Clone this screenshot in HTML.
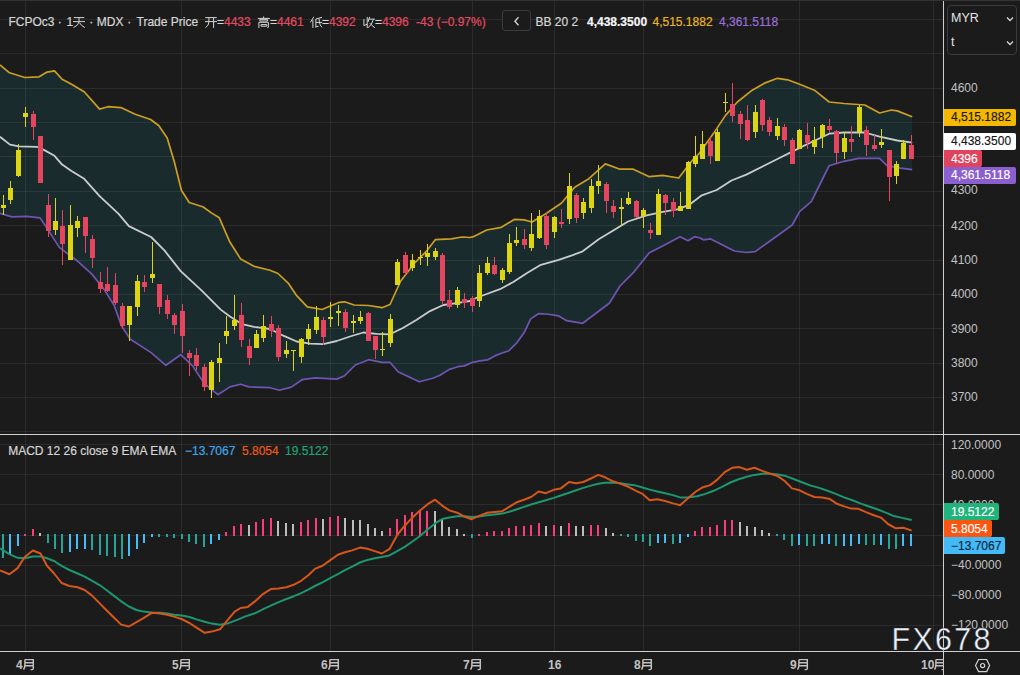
<!DOCTYPE html>
<html><head><meta charset="utf-8"><style>
html,body{margin:0;padding:0;background:#1b1b1b;width:1020px;height:675px;overflow:hidden}
body{position:relative;font-family:"Liberation Sans",sans-serif}
svg{position:absolute;left:0;top:0}
.t{position:absolute;white-space:nowrap;line-height:1}
.h{font-size:12px;color:#d6d6d6;top:16px;-webkit-text-stroke:0.2px currentColor}
.r{color:#e24a62}
.ax{font-size:12px;color:#c2c2c2;left:951px}
.tm{font-size:12px;color:#c2c2c2;font-weight:bold;top:659px}
.cj{display:inline-block;position:relative;width:12px;height:12px;vertical-align:top}
.cj svg{position:absolute;left:0;top:0;overflow:visible}
.lbl{position:absolute;left:944px;height:17px;font-size:12px;line-height:17px;padding-left:7px;box-sizing:border-box;white-space:nowrap;border-radius:0 2px 2px 0;-webkit-text-stroke:0.15px currentColor}
</style></head><body>
<svg width="1020" height="675" viewBox="0 0 1020 675">
<polygon points="0.0,65.0 9.5,72.8 24.9,77.5 39.1,76.8 47.0,72.1 54.5,70.9 62.1,79.2 71.1,83.9 84.2,91.8 99.6,109.1 107.9,106.7 120.9,107.6 135.2,114.3 150.6,119.5 158.9,125.7 167.2,138.0 174.3,161.7 181.4,190.2 189.2,202.5 202.8,206.8 212.2,213.4 219.3,217.8 230.0,242.3 240.7,259.1 254.0,266.3 270.0,270.3 278.0,273.5 288.7,283.7 296.7,295.7 307.3,306.9 322.0,309.5 339.3,302.3 344.7,301.8 354.0,305.0 368.7,305.5 382.0,307.7 390.0,304.5 400.7,281.0 414.0,263.7 426.0,251.7 435.3,239.7 451.3,238.9 462.0,237.0 470.0,237.5 473.3,236.7 486.7,230.0 501.3,227.3 514.7,219.3 524.0,219.9 532.0,222.0 545.3,214.0 561.3,203.3 574.7,187.3 588.0,179.3 605.3,163.9 620.0,169.2 633.3,169.2 649.3,176.7 662.7,175.3 678.7,178.0 692.0,160.7 698.9,153.9 713.7,133.1 725.5,115.4 737.4,102.0 752.2,90.2 764.0,83.4 777.4,78.3 787.7,79.8 799.6,84.3 814.4,90.2 829.2,102.0 844.0,103.5 864.8,105.0 879.6,113.0 891.4,110.0 897.3,110.9 912.2,116.8 912.2,169.6 900.3,168.1 887.0,165.7 879.6,158.3 858.8,158.3 844.0,161.3 829.2,165.7 820.3,183.5 811.4,201.3 799.6,211.6 792.2,225.0 775.9,236.8 755.2,251.6 746.3,252.5 734.4,251.0 722.6,245.1 710.7,238.9 703.3,239.8 700.0,238.0 694.7,236.7 688.0,240.7 680.0,236.7 662.7,246.0 649.3,252.7 633.3,272.7 620.0,286.0 609.3,303.3 593.3,315.3 582.7,323.3 566.7,320.7 558.7,315.9 546.7,314.0 538.5,313.7 530.7,318.9 524.4,332.2 517.0,342.6 508.9,350.7 502.2,353.0 494.8,355.9 487.4,359.9 480.0,360.8 472.6,362.3 464.4,365.9 457.8,366.7 448.9,369.6 440.0,375.2 432.7,378.3 419.3,381.8 398.0,371.7 390.0,362.3 382.0,362.3 368.7,359.7 355.3,365.0 344.7,375.7 336.7,379.1 315.3,377.8 302.0,379.7 291.3,387.1 279.3,390.3 270.0,387.7 248.7,386.9 240.7,384.2 230.0,386.9 217.8,394.7 204.4,383.7 192.6,365.9 180.7,354.7 165.9,365.3 151.1,352.6 130.4,339.3 121.5,325.9 114.1,305.2 103.7,288.9 91.9,274.1 77.0,260.7 59.3,247.4 48.9,231.1 40.0,217.8 26.7,216.3 11.9,216.9 0.0,213.3" fill="#1a2b2e"/>
<rect x="0" y="19" width="944" height="1" fill="rgba(255,255,255,0.07)"/>
<rect x="0" y="53" width="944" height="1" fill="rgba(255,255,255,0.07)"/>
<rect x="0" y="88" width="944" height="1" fill="rgba(255,255,255,0.07)"/>
<rect x="0" y="122" width="944" height="1" fill="rgba(255,255,255,0.07)"/>
<rect x="0" y="156" width="944" height="1" fill="rgba(255,255,255,0.07)"/>
<rect x="0" y="191" width="944" height="1" fill="rgba(255,255,255,0.07)"/>
<rect x="0" y="225" width="944" height="1" fill="rgba(255,255,255,0.07)"/>
<rect x="0" y="260" width="944" height="1" fill="rgba(255,255,255,0.07)"/>
<rect x="0" y="294" width="944" height="1" fill="rgba(255,255,255,0.07)"/>
<rect x="0" y="328" width="944" height="1" fill="rgba(255,255,255,0.07)"/>
<rect x="0" y="363" width="944" height="1" fill="rgba(255,255,255,0.07)"/>
<rect x="0" y="397" width="944" height="1" fill="rgba(255,255,255,0.07)"/>
<rect x="0" y="431" width="944" height="1" fill="rgba(255,255,255,0.07)"/>
<rect x="0" y="444" width="944" height="1" fill="rgba(255,255,255,0.07)"/>
<rect x="0" y="474" width="944" height="1" fill="rgba(255,255,255,0.07)"/>
<rect x="0" y="504" width="944" height="1" fill="rgba(255,255,255,0.07)"/>
<rect x="0" y="535" width="944" height="1" fill="rgba(255,255,255,0.07)"/>
<rect x="0" y="565" width="944" height="1" fill="rgba(255,255,255,0.07)"/>
<rect x="0" y="595" width="944" height="1" fill="rgba(255,255,255,0.07)"/>
<rect x="0" y="625" width="944" height="1" fill="rgba(255,255,255,0.07)"/>
<rect x="25" y="0" width="1" height="651" fill="rgba(255,255,255,0.07)"/>
<rect x="181" y="0" width="1" height="651" fill="rgba(255,255,255,0.07)"/>
<rect x="330" y="0" width="1" height="651" fill="rgba(255,255,255,0.07)"/>
<rect x="472" y="0" width="1" height="651" fill="rgba(255,255,255,0.07)"/>
<rect x="554" y="0" width="1" height="651" fill="rgba(255,255,255,0.07)"/>
<rect x="643" y="0" width="1" height="651" fill="rgba(255,255,255,0.07)"/>
<rect x="799" y="0" width="1" height="651" fill="rgba(255,255,255,0.07)"/>
<rect x="933" y="0" width="1" height="651" fill="rgba(255,255,255,0.07)"/>
<polyline points="0.0,65.0 9.5,72.8 24.9,77.5 39.1,76.8 47.0,72.1 54.5,70.9 62.1,79.2 71.1,83.9 84.2,91.8 99.6,109.1 107.9,106.7 120.9,107.6 135.2,114.3 150.6,119.5 158.9,125.7 167.2,138.0 174.3,161.7 181.4,190.2 189.2,202.5 202.8,206.8 212.2,213.4 219.3,217.8 230.0,242.3 240.7,259.1 254.0,266.3 270.0,270.3 278.0,273.5 288.7,283.7 296.7,295.7 307.3,306.9 322.0,309.5 339.3,302.3 344.7,301.8 354.0,305.0 368.7,305.5 382.0,307.7 390.0,304.5 400.7,281.0 414.0,263.7 426.0,251.7 435.3,239.7 451.3,238.9 462.0,237.0 470.0,237.5 473.3,236.7 486.7,230.0 501.3,227.3 514.7,219.3 524.0,219.9 532.0,222.0 545.3,214.0 561.3,203.3 574.7,187.3 588.0,179.3 605.3,163.9 620.0,169.2 633.3,169.2 649.3,176.7 662.7,175.3 678.7,178.0 692.0,160.7 698.9,153.9 713.7,133.1 725.5,115.4 737.4,102.0 752.2,90.2 764.0,83.4 777.4,78.3 787.7,79.8 799.6,84.3 814.4,90.2 829.2,102.0 844.0,103.5 864.8,105.0 879.6,113.0 891.4,110.0 897.3,110.9 912.2,116.8" fill="none" stroke="#cc9e22" stroke-width="1.7" stroke-linejoin="round"/>
<polyline points="0.0,213.3 11.9,216.9 26.7,216.3 40.0,217.8 48.9,231.1 59.3,247.4 77.0,260.7 91.9,274.1 103.7,288.9 114.1,305.2 121.5,325.9 130.4,339.3 151.1,352.6 165.9,365.3 180.7,354.7 192.6,365.9 204.4,383.7 217.8,394.7 230.0,386.9 240.7,384.2 248.7,386.9 270.0,387.7 279.3,390.3 291.3,387.1 302.0,379.7 315.3,377.8 336.7,379.1 344.7,375.7 355.3,365.0 368.7,359.7 382.0,362.3 390.0,362.3 398.0,371.7 419.3,381.8 432.7,378.3 440.0,375.2 448.9,369.6 457.8,366.7 464.4,365.9 472.6,362.3 480.0,360.8 487.4,359.9 494.8,355.9 502.2,353.0 508.9,350.7 517.0,342.6 524.4,332.2 530.7,318.9 538.5,313.7 546.7,314.0 558.7,315.9 566.7,320.7 582.7,323.3 593.3,315.3 609.3,303.3 620.0,286.0 633.3,272.7 649.3,252.7 662.7,246.0 680.0,236.7 688.0,240.7 694.7,236.7 700.0,238.0 703.3,239.8 710.7,238.9 722.6,245.1 734.4,251.0 746.3,252.5 755.2,251.6 775.9,236.8 792.2,225.0 799.6,211.6 811.4,201.3 820.3,183.5 829.2,165.7 844.0,161.3 858.8,158.3 879.6,158.3 887.0,165.7 900.3,168.1 912.2,169.6" fill="none" stroke="#6f55b3" stroke-width="1.7" stroke-linejoin="round"/>
<polyline points="0.0,136.8 10.0,144.6 19.0,146.3 36.8,146.8 43.9,149.9 54.5,155.8 62.1,164.6 71.1,170.7 84.2,178.8 99.6,196.1 118.6,213.9 128.9,226.1 151.1,237.0 164.4,250.4 180.7,271.1 201.5,290.4 220.7,309.6 230.0,316.5 242.0,324.2 254.0,326.9 270.0,329.0 283.3,335.7 296.7,341.5 310.0,343.7 323.3,344.2 336.7,341.0 350.0,336.5 363.3,332.5 376.7,333.8 390.0,334.3 403.3,327.7 416.7,319.7 430.0,311.1 443.3,305.0 456.7,303.1 470.0,301.0 476.0,298.0 486.7,294.0 500.0,289.2 513.3,282.0 526.7,273.2 540.0,265.2 558.7,259.9 572.0,255.3 582.7,251.3 598.7,239.3 612.0,231.3 628.0,221.5 646.7,215.3 662.7,211.9 678.7,209.2 689.3,204.7 701.8,195.3 716.7,190.0 731.5,180.5 746.3,174.6 764.0,165.7 778.9,158.3 790.7,152.4 808.5,143.5 829.2,133.7 844.0,132.5 864.8,132.5 879.6,136.7 897.3,140.5 912.2,142.6" fill="none" stroke="#c9cccc" stroke-width="1.8" stroke-linejoin="round"/>
<rect x="3" y="195" width="1" height="20" fill="#dcd514"/>
<rect x="1" y="205" width="5" height="3" fill="#dcd514"/>
<rect x="10" y="181" width="1" height="23" fill="#dcd514"/>
<rect x="8" y="188" width="5" height="12" fill="#dcd514"/>
<rect x="18" y="144" width="1" height="33" fill="#dcd514"/>
<rect x="16" y="150" width="5" height="26" fill="#dcd514"/>
<rect x="25" y="107" width="1" height="20" fill="#dcd514"/>
<rect x="23" y="113" width="5" height="4" fill="#dcd514"/>
<rect x="33" y="111" width="1" height="29" fill="#e6455f"/>
<rect x="31" y="114" width="5" height="13" fill="#e6455f"/>
<rect x="40" y="136" width="1" height="47" fill="#e6455f"/>
<rect x="38" y="136" width="5" height="47" fill="#e6455f"/>
<rect x="48" y="194" width="1" height="43" fill="#e6455f"/>
<rect x="46" y="205" width="5" height="26" fill="#e6455f"/>
<rect x="55" y="198" width="1" height="37" fill="#dcd514"/>
<rect x="53" y="221" width="5" height="9" fill="#dcd514"/>
<rect x="62" y="210" width="1" height="55" fill="#e6455f"/>
<rect x="60" y="226" width="5" height="18" fill="#e6455f"/>
<rect x="70" y="205" width="1" height="55" fill="#dcd514"/>
<rect x="68" y="225" width="5" height="35" fill="#dcd514"/>
<rect x="77" y="216" width="1" height="21" fill="#dcd514"/>
<rect x="75" y="221" width="5" height="7" fill="#dcd514"/>
<rect x="85" y="217" width="1" height="36" fill="#e6455f"/>
<rect x="83" y="217" width="5" height="19" fill="#e6455f"/>
<rect x="92" y="235" width="1" height="33" fill="#e6455f"/>
<rect x="90" y="239" width="5" height="19" fill="#e6455f"/>
<rect x="100" y="272" width="1" height="21" fill="#e6455f"/>
<rect x="98" y="282" width="5" height="7" fill="#e6455f"/>
<rect x="107" y="267" width="1" height="25" fill="#e6455f"/>
<rect x="105" y="284" width="5" height="7" fill="#e6455f"/>
<rect x="115" y="273" width="1" height="32" fill="#e6455f"/>
<rect x="113" y="285" width="5" height="18" fill="#e6455f"/>
<rect x="122" y="303" width="1" height="26" fill="#e6455f"/>
<rect x="120" y="306" width="5" height="20" fill="#e6455f"/>
<rect x="129" y="306" width="1" height="35" fill="#dcd514"/>
<rect x="127" y="306" width="5" height="19" fill="#dcd514"/>
<rect x="137" y="275" width="1" height="41" fill="#dcd514"/>
<rect x="135" y="281" width="5" height="26" fill="#dcd514"/>
<rect x="144" y="275" width="1" height="17" fill="#e6455f"/>
<rect x="142" y="282" width="5" height="5" fill="#e6455f"/>
<rect x="152" y="242" width="1" height="41" fill="#dcd514"/>
<rect x="150" y="274" width="5" height="4" fill="#dcd514"/>
<rect x="159" y="284" width="1" height="30" fill="#e6455f"/>
<rect x="157" y="284" width="5" height="23" fill="#e6455f"/>
<rect x="167" y="295" width="1" height="24" fill="#e6455f"/>
<rect x="165" y="300" width="5" height="14" fill="#e6455f"/>
<rect x="174" y="313" width="1" height="21" fill="#e6455f"/>
<rect x="172" y="315" width="5" height="10" fill="#e6455f"/>
<rect x="182" y="304" width="1" height="49" fill="#e6455f"/>
<rect x="180" y="311" width="5" height="25" fill="#e6455f"/>
<rect x="189" y="350" width="1" height="26" fill="#e6455f"/>
<rect x="187" y="353" width="5" height="5" fill="#e6455f"/>
<rect x="196" y="348" width="1" height="22" fill="#e6455f"/>
<rect x="194" y="355" width="5" height="11" fill="#e6455f"/>
<rect x="204" y="364" width="1" height="27" fill="#e6455f"/>
<rect x="202" y="367" width="5" height="20" fill="#e6455f"/>
<rect x="211" y="360" width="1" height="38" fill="#dcd514"/>
<rect x="209" y="362" width="5" height="28" fill="#dcd514"/>
<rect x="219" y="343" width="1" height="39" fill="#dcd514"/>
<rect x="217" y="358" width="5" height="5" fill="#dcd514"/>
<rect x="226" y="316" width="1" height="28" fill="#dcd514"/>
<rect x="224" y="331" width="5" height="5" fill="#dcd514"/>
<rect x="234" y="295" width="1" height="35" fill="#dcd514"/>
<rect x="232" y="320" width="5" height="6" fill="#dcd514"/>
<rect x="241" y="303" width="1" height="44" fill="#e6455f"/>
<rect x="239" y="315" width="5" height="25" fill="#e6455f"/>
<rect x="249" y="339" width="1" height="26" fill="#e6455f"/>
<rect x="247" y="346" width="5" height="12" fill="#e6455f"/>
<rect x="256" y="330" width="1" height="18" fill="#dcd514"/>
<rect x="254" y="334" width="5" height="14" fill="#dcd514"/>
<rect x="263" y="315" width="1" height="27" fill="#dcd514"/>
<rect x="261" y="326" width="5" height="12" fill="#dcd514"/>
<rect x="271" y="316" width="1" height="21" fill="#e6455f"/>
<rect x="269" y="324" width="5" height="7" fill="#e6455f"/>
<rect x="278" y="325" width="1" height="36" fill="#e6455f"/>
<rect x="276" y="328" width="5" height="29" fill="#e6455f"/>
<rect x="286" y="341" width="1" height="17" fill="#dcd514"/>
<rect x="284" y="350" width="5" height="4" fill="#dcd514"/>
<rect x="293" y="350" width="1" height="21" fill="#dcd514"/>
<rect x="291" y="350" width="5" height="1" fill="#dcd514"/>
<rect x="301" y="338" width="1" height="25" fill="#dcd514"/>
<rect x="299" y="339" width="5" height="18" fill="#dcd514"/>
<rect x="308" y="324" width="1" height="21" fill="#dcd514"/>
<rect x="306" y="329" width="5" height="10" fill="#dcd514"/>
<rect x="316" y="306" width="1" height="28" fill="#dcd514"/>
<rect x="314" y="317" width="5" height="13" fill="#dcd514"/>
<rect x="323" y="317" width="1" height="28" fill="#e6455f"/>
<rect x="321" y="320" width="5" height="17" fill="#e6455f"/>
<rect x="330" y="302" width="1" height="25" fill="#dcd514"/>
<rect x="328" y="317" width="5" height="2" fill="#dcd514"/>
<rect x="338" y="305" width="1" height="21" fill="#dcd514"/>
<rect x="336" y="311" width="5" height="2" fill="#dcd514"/>
<rect x="345" y="309" width="1" height="23" fill="#e6455f"/>
<rect x="343" y="312" width="5" height="16" fill="#e6455f"/>
<rect x="353" y="315" width="1" height="18" fill="#dcd514"/>
<rect x="351" y="321" width="5" height="2" fill="#dcd514"/>
<rect x="360" y="311" width="1" height="13" fill="#dcd514"/>
<rect x="358" y="317" width="5" height="4" fill="#dcd514"/>
<rect x="368" y="312" width="1" height="29" fill="#e6455f"/>
<rect x="366" y="313" width="5" height="28" fill="#e6455f"/>
<rect x="375" y="336" width="1" height="23" fill="#e6455f"/>
<rect x="373" y="336" width="5" height="14" fill="#e6455f"/>
<rect x="382" y="332" width="1" height="24" fill="#dcd514"/>
<rect x="380" y="349" width="5" height="1" fill="#dcd514"/>
<rect x="390" y="314" width="1" height="33" fill="#dcd514"/>
<rect x="388" y="319" width="5" height="24" fill="#dcd514"/>
<rect x="397" y="259" width="1" height="26" fill="#dcd514"/>
<rect x="395" y="262" width="5" height="23" fill="#dcd514"/>
<rect x="405" y="252" width="1" height="23" fill="#e6455f"/>
<rect x="403" y="255" width="5" height="18" fill="#e6455f"/>
<rect x="412" y="254" width="1" height="17" fill="#dcd514"/>
<rect x="410" y="260" width="5" height="8" fill="#dcd514"/>
<rect x="420" y="250" width="1" height="15" fill="#dcd514"/>
<rect x="418" y="257" width="5" height="1" fill="#dcd514"/>
<rect x="427" y="244" width="1" height="22" fill="#dcd514"/>
<rect x="425" y="253" width="5" height="4" fill="#dcd514"/>
<rect x="435" y="248" width="1" height="12" fill="#dcd514"/>
<rect x="433" y="251" width="5" height="6" fill="#dcd514"/>
<rect x="442" y="253" width="1" height="52" fill="#e6455f"/>
<rect x="440" y="255" width="5" height="46" fill="#e6455f"/>
<rect x="449" y="290" width="1" height="19" fill="#e6455f"/>
<rect x="447" y="300" width="5" height="7" fill="#e6455f"/>
<rect x="457" y="287" width="1" height="21" fill="#dcd514"/>
<rect x="455" y="290" width="5" height="15" fill="#dcd514"/>
<rect x="464" y="293" width="1" height="15" fill="#e6455f"/>
<rect x="462" y="299" width="5" height="4" fill="#e6455f"/>
<rect x="472" y="296" width="1" height="16" fill="#e6455f"/>
<rect x="470" y="298" width="5" height="8" fill="#e6455f"/>
<rect x="479" y="265" width="1" height="42" fill="#dcd514"/>
<rect x="477" y="273" width="5" height="28" fill="#dcd514"/>
<rect x="487" y="257" width="1" height="18" fill="#dcd514"/>
<rect x="485" y="263" width="5" height="10" fill="#dcd514"/>
<rect x="494" y="257" width="1" height="18" fill="#e6455f"/>
<rect x="492" y="265" width="5" height="9" fill="#e6455f"/>
<rect x="502" y="268" width="1" height="15" fill="#dcd514"/>
<rect x="500" y="270" width="5" height="10" fill="#dcd514"/>
<rect x="509" y="234" width="1" height="40" fill="#dcd514"/>
<rect x="507" y="243" width="5" height="29" fill="#dcd514"/>
<rect x="516" y="227" width="1" height="19" fill="#dcd514"/>
<rect x="514" y="240" width="5" height="3" fill="#dcd514"/>
<rect x="524" y="229" width="1" height="20" fill="#e6455f"/>
<rect x="522" y="239" width="5" height="6" fill="#e6455f"/>
<rect x="531" y="213" width="1" height="38" fill="#dcd514"/>
<rect x="529" y="234" width="5" height="14" fill="#dcd514"/>
<rect x="539" y="210" width="1" height="29" fill="#dcd514"/>
<rect x="537" y="216" width="5" height="22" fill="#dcd514"/>
<rect x="546" y="212" width="1" height="37" fill="#e6455f"/>
<rect x="544" y="216" width="5" height="29" fill="#e6455f"/>
<rect x="554" y="216" width="1" height="22" fill="#dcd514"/>
<rect x="552" y="217" width="5" height="15" fill="#dcd514"/>
<rect x="561" y="209" width="1" height="19" fill="#e6455f"/>
<rect x="559" y="222" width="5" height="2" fill="#e6455f"/>
<rect x="569" y="173" width="1" height="51" fill="#dcd514"/>
<rect x="567" y="186" width="5" height="33" fill="#dcd514"/>
<rect x="576" y="193" width="1" height="30" fill="#e6455f"/>
<rect x="574" y="195" width="5" height="23" fill="#e6455f"/>
<rect x="583" y="198" width="1" height="21" fill="#dcd514"/>
<rect x="581" y="202" width="5" height="11" fill="#dcd514"/>
<rect x="591" y="179" width="1" height="34" fill="#dcd514"/>
<rect x="589" y="186" width="5" height="22" fill="#dcd514"/>
<rect x="598" y="165" width="1" height="29" fill="#dcd514"/>
<rect x="596" y="181" width="5" height="5" fill="#dcd514"/>
<rect x="606" y="182" width="1" height="31" fill="#e6455f"/>
<rect x="604" y="184" width="5" height="17" fill="#e6455f"/>
<rect x="613" y="200" width="1" height="18" fill="#e6455f"/>
<rect x="611" y="206" width="5" height="6" fill="#e6455f"/>
<rect x="621" y="198" width="1" height="28" fill="#dcd514"/>
<rect x="619" y="207" width="5" height="2" fill="#dcd514"/>
<rect x="628" y="192" width="1" height="13" fill="#dcd514"/>
<rect x="626" y="198" width="5" height="6" fill="#dcd514"/>
<rect x="636" y="200" width="1" height="18" fill="#e6455f"/>
<rect x="634" y="201" width="5" height="16" fill="#e6455f"/>
<rect x="643" y="208" width="1" height="20" fill="#dcd514"/>
<rect x="641" y="210" width="5" height="6" fill="#dcd514"/>
<rect x="650" y="223" width="1" height="16" fill="#e6455f"/>
<rect x="648" y="230" width="5" height="3" fill="#e6455f"/>
<rect x="658" y="189" width="1" height="46" fill="#dcd514"/>
<rect x="656" y="194" width="5" height="41" fill="#dcd514"/>
<rect x="665" y="194" width="1" height="21" fill="#e6455f"/>
<rect x="663" y="195" width="5" height="8" fill="#e6455f"/>
<rect x="673" y="198" width="1" height="19" fill="#e6455f"/>
<rect x="671" y="202" width="5" height="9" fill="#e6455f"/>
<rect x="680" y="192" width="1" height="19" fill="#dcd514"/>
<rect x="678" y="206" width="5" height="5" fill="#dcd514"/>
<rect x="688" y="161" width="1" height="48" fill="#dcd514"/>
<rect x="686" y="162" width="5" height="47" fill="#dcd514"/>
<rect x="695" y="136" width="1" height="31" fill="#dcd514"/>
<rect x="693" y="156" width="5" height="8" fill="#dcd514"/>
<rect x="702" y="131" width="1" height="28" fill="#dcd514"/>
<rect x="700" y="144" width="5" height="15" fill="#dcd514"/>
<rect x="710" y="136" width="1" height="28" fill="#e6455f"/>
<rect x="708" y="141" width="5" height="15" fill="#e6455f"/>
<rect x="717" y="129" width="1" height="32" fill="#dcd514"/>
<rect x="715" y="132" width="5" height="29" fill="#dcd514"/>
<rect x="725" y="93" width="1" height="19" fill="#dcd514"/>
<rect x="723" y="102" width="5" height="1" fill="#dcd514"/>
<rect x="732" y="83" width="1" height="39" fill="#e6455f"/>
<rect x="730" y="104" width="5" height="12" fill="#e6455f"/>
<rect x="740" y="111" width="1" height="28" fill="#e6455f"/>
<rect x="738" y="114" width="5" height="10" fill="#e6455f"/>
<rect x="747" y="105" width="1" height="36" fill="#e6455f"/>
<rect x="745" y="120" width="5" height="20" fill="#e6455f"/>
<rect x="755" y="105" width="1" height="33" fill="#dcd514"/>
<rect x="753" y="112" width="5" height="20" fill="#dcd514"/>
<rect x="762" y="99" width="1" height="32" fill="#e6455f"/>
<rect x="760" y="100" width="5" height="25" fill="#e6455f"/>
<rect x="769" y="117" width="1" height="19" fill="#e6455f"/>
<rect x="767" y="120" width="5" height="12" fill="#e6455f"/>
<rect x="777" y="118" width="1" height="22" fill="#dcd514"/>
<rect x="775" y="126" width="5" height="10" fill="#dcd514"/>
<rect x="784" y="124" width="1" height="22" fill="#e6455f"/>
<rect x="782" y="127" width="5" height="13" fill="#e6455f"/>
<rect x="792" y="138" width="1" height="26" fill="#e6455f"/>
<rect x="790" y="140" width="5" height="24" fill="#e6455f"/>
<rect x="799" y="129" width="1" height="20" fill="#dcd514"/>
<rect x="797" y="130" width="5" height="19" fill="#dcd514"/>
<rect x="807" y="123" width="1" height="26" fill="#e6455f"/>
<rect x="805" y="135" width="5" height="8" fill="#e6455f"/>
<rect x="814" y="127" width="1" height="27" fill="#dcd514"/>
<rect x="812" y="140" width="5" height="7" fill="#dcd514"/>
<rect x="822" y="124" width="1" height="24" fill="#dcd514"/>
<rect x="820" y="125" width="5" height="12" fill="#dcd514"/>
<rect x="829" y="119" width="1" height="14" fill="#e6455f"/>
<rect x="827" y="126" width="5" height="4" fill="#e6455f"/>
<rect x="836" y="130" width="1" height="33" fill="#e6455f"/>
<rect x="834" y="131" width="5" height="22" fill="#e6455f"/>
<rect x="844" y="132" width="1" height="27" fill="#dcd514"/>
<rect x="842" y="138" width="5" height="14" fill="#dcd514"/>
<rect x="851" y="126" width="1" height="26" fill="#e6455f"/>
<rect x="849" y="139" width="5" height="3" fill="#e6455f"/>
<rect x="859" y="105" width="1" height="32" fill="#dcd514"/>
<rect x="857" y="107" width="5" height="25" fill="#dcd514"/>
<rect x="866" y="126" width="1" height="30" fill="#e6455f"/>
<rect x="864" y="130" width="5" height="15" fill="#e6455f"/>
<rect x="874" y="135" width="1" height="16" fill="#e6455f"/>
<rect x="872" y="145" width="5" height="4" fill="#e6455f"/>
<rect x="881" y="129" width="1" height="19" fill="#dcd514"/>
<rect x="879" y="142" width="5" height="3" fill="#dcd514"/>
<rect x="889" y="150" width="1" height="51" fill="#e6455f"/>
<rect x="887" y="150" width="5" height="27" fill="#e6455f"/>
<rect x="896" y="161" width="1" height="23" fill="#dcd514"/>
<rect x="894" y="164" width="5" height="12" fill="#dcd514"/>
<rect x="903" y="140" width="1" height="19" fill="#dcd514"/>
<rect x="901" y="143" width="5" height="16" fill="#dcd514"/>
<rect x="911" y="135" width="1" height="24" fill="#e6455f"/>
<rect x="909" y="145" width="5" height="14" fill="#e6455f"/>
<rect x="2" y="534" width="2" height="24" fill="#22a69a"/>
<rect x="9" y="534" width="2" height="20" fill="#43bdf7"/>
<rect x="17" y="534" width="2" height="12" fill="#43bdf7"/>
<rect x="24" y="534" width="2" height="2" fill="#fb3b7a"/>
<rect x="32" y="529" width="2" height="7" fill="#fb3b7a"/>
<rect x="39" y="533" width="2" height="3" fill="#bdbdbd"/>
<rect x="47" y="534" width="2" height="9" fill="#22a69a"/>
<rect x="54" y="534" width="2" height="15" fill="#22a69a"/>
<rect x="61" y="534" width="2" height="19" fill="#22a69a"/>
<rect x="69" y="534" width="2" height="18" fill="#43bdf7"/>
<rect x="76" y="534" width="2" height="15" fill="#43bdf7"/>
<rect x="84" y="534" width="2" height="15" fill="#43bdf7"/>
<rect x="91" y="534" width="2" height="16" fill="#22a69a"/>
<rect x="99" y="534" width="2" height="21" fill="#22a69a"/>
<rect x="106" y="534" width="2" height="22" fill="#22a69a"/>
<rect x="114" y="534" width="2" height="23" fill="#22a69a"/>
<rect x="121" y="534" width="2" height="25" fill="#22a69a"/>
<rect x="128" y="534" width="2" height="22" fill="#43bdf7"/>
<rect x="136" y="534" width="2" height="15" fill="#43bdf7"/>
<rect x="143" y="534" width="2" height="9" fill="#43bdf7"/>
<rect x="151" y="534" width="2" height="3" fill="#43bdf7"/>
<rect x="158" y="534" width="2" height="3" fill="#22a69a"/>
<rect x="166" y="534" width="2" height="3" fill="#22a69a"/>
<rect x="173" y="534" width="2" height="4" fill="#22a69a"/>
<rect x="181" y="534" width="2" height="5" fill="#22a69a"/>
<rect x="188" y="534" width="2" height="8" fill="#22a69a"/>
<rect x="195" y="534" width="2" height="10" fill="#22a69a"/>
<rect x="203" y="534" width="2" height="13" fill="#22a69a"/>
<rect x="210" y="534" width="2" height="10" fill="#43bdf7"/>
<rect x="218" y="534" width="2" height="6" fill="#43bdf7"/>
<rect x="225" y="532" width="2" height="4" fill="#fb3b7a"/>
<rect x="233" y="526" width="2" height="10" fill="#fb3b7a"/>
<rect x="240" y="524" width="2" height="12" fill="#fb3b7a"/>
<rect x="248" y="525" width="2" height="11" fill="#bdbdbd"/>
<rect x="255" y="522" width="2" height="14" fill="#fb3b7a"/>
<rect x="262" y="519" width="2" height="17" fill="#fb3b7a"/>
<rect x="270" y="518" width="2" height="18" fill="#fb3b7a"/>
<rect x="277" y="521" width="2" height="15" fill="#bdbdbd"/>
<rect x="285" y="523" width="2" height="13" fill="#bdbdbd"/>
<rect x="292" y="524" width="2" height="12" fill="#bdbdbd"/>
<rect x="300" y="522" width="2" height="14" fill="#fb3b7a"/>
<rect x="307" y="520" width="2" height="16" fill="#fb3b7a"/>
<rect x="315" y="518" width="2" height="18" fill="#fb3b7a"/>
<rect x="322" y="519" width="2" height="17" fill="#bdbdbd"/>
<rect x="329" y="517" width="2" height="19" fill="#fb3b7a"/>
<rect x="337" y="516" width="2" height="20" fill="#fb3b7a"/>
<rect x="344" y="518" width="2" height="18" fill="#bdbdbd"/>
<rect x="352" y="520" width="2" height="16" fill="#bdbdbd"/>
<rect x="359" y="520" width="2" height="16" fill="#bdbdbd"/>
<rect x="367" y="524" width="2" height="12" fill="#bdbdbd"/>
<rect x="374" y="528" width="2" height="8" fill="#bdbdbd"/>
<rect x="381" y="531" width="2" height="5" fill="#bdbdbd"/>
<rect x="389" y="528" width="2" height="8" fill="#fb3b7a"/>
<rect x="396" y="519" width="2" height="17" fill="#fb3b7a"/>
<rect x="404" y="515" width="2" height="21" fill="#fb3b7a"/>
<rect x="411" y="512" width="2" height="24" fill="#fb3b7a"/>
<rect x="419" y="511" width="2" height="25" fill="#fb3b7a"/>
<rect x="426" y="511" width="2" height="25" fill="#fb3b7a"/>
<rect x="434" y="511" width="2" height="25" fill="#bdbdbd"/>
<rect x="441" y="520" width="2" height="16" fill="#bdbdbd"/>
<rect x="448" y="527" width="2" height="9" fill="#bdbdbd"/>
<rect x="456" y="529" width="2" height="7" fill="#bdbdbd"/>
<rect x="463" y="534" width="2" height="2" fill="#bdbdbd"/>
<rect x="471" y="534" width="2" height="4" fill="#22a69a"/>
<rect x="478" y="534" width="2" height="2" fill="#fb3b7a"/>
<rect x="486" y="532" width="2" height="4" fill="#fb3b7a"/>
<rect x="493" y="531" width="2" height="5" fill="#fb3b7a"/>
<rect x="501" y="531" width="2" height="5" fill="#fb3b7a"/>
<rect x="508" y="528" width="2" height="8" fill="#fb3b7a"/>
<rect x="515" y="526" width="2" height="10" fill="#fb3b7a"/>
<rect x="523" y="526" width="2" height="10" fill="#fb3b7a"/>
<rect x="530" y="525" width="2" height="11" fill="#fb3b7a"/>
<rect x="538" y="523" width="2" height="13" fill="#fb3b7a"/>
<rect x="545" y="526" width="2" height="10" fill="#bdbdbd"/>
<rect x="553" y="525" width="2" height="11" fill="#fb3b7a"/>
<rect x="560" y="526" width="2" height="10" fill="#bdbdbd"/>
<rect x="568" y="523" width="2" height="13" fill="#fb3b7a"/>
<rect x="575" y="526" width="2" height="10" fill="#bdbdbd"/>
<rect x="582" y="526" width="2" height="10" fill="#bdbdbd"/>
<rect x="590" y="525" width="2" height="11" fill="#fb3b7a"/>
<rect x="597" y="525" width="2" height="11" fill="#fb3b7a"/>
<rect x="605" y="528" width="2" height="8" fill="#bdbdbd"/>
<rect x="612" y="533" width="2" height="3" fill="#bdbdbd"/>
<rect x="620" y="534" width="2" height="2" fill="#22a69a"/>
<rect x="627" y="534" width="2" height="3" fill="#22a69a"/>
<rect x="635" y="534" width="2" height="7" fill="#22a69a"/>
<rect x="642" y="534" width="2" height="8" fill="#22a69a"/>
<rect x="649" y="534" width="2" height="12" fill="#22a69a"/>
<rect x="657" y="534" width="2" height="9" fill="#43bdf7"/>
<rect x="664" y="534" width="2" height="9" fill="#43bdf7"/>
<rect x="672" y="534" width="2" height="10" fill="#22a69a"/>
<rect x="679" y="534" width="2" height="9" fill="#43bdf7"/>
<rect x="687" y="534" width="2" height="3" fill="#43bdf7"/>
<rect x="694" y="531" width="2" height="5" fill="#fb3b7a"/>
<rect x="701" y="527" width="2" height="9" fill="#fb3b7a"/>
<rect x="709" y="527" width="2" height="9" fill="#fb3b7a"/>
<rect x="716" y="525" width="2" height="11" fill="#fb3b7a"/>
<rect x="724" y="520" width="2" height="16" fill="#fb3b7a"/>
<rect x="731" y="520" width="2" height="16" fill="#fb3b7a"/>
<rect x="739" y="522" width="2" height="14" fill="#bdbdbd"/>
<rect x="746" y="526" width="2" height="10" fill="#bdbdbd"/>
<rect x="754" y="527" width="2" height="9" fill="#bdbdbd"/>
<rect x="761" y="530" width="2" height="6" fill="#bdbdbd"/>
<rect x="768" y="533" width="2" height="3" fill="#bdbdbd"/>
<rect x="776" y="534" width="2" height="2" fill="#22a69a"/>
<rect x="783" y="534" width="2" height="6" fill="#22a69a"/>
<rect x="791" y="534" width="2" height="12" fill="#22a69a"/>
<rect x="798" y="534" width="2" height="11" fill="#43bdf7"/>
<rect x="806" y="534" width="2" height="12" fill="#22a69a"/>
<rect x="813" y="534" width="2" height="12" fill="#22a69a"/>
<rect x="821" y="534" width="2" height="10" fill="#43bdf7"/>
<rect x="828" y="534" width="2" height="10" fill="#43bdf7"/>
<rect x="835" y="534" width="2" height="12" fill="#22a69a"/>
<rect x="843" y="534" width="2" height="12" fill="#43bdf7"/>
<rect x="850" y="534" width="2" height="12" fill="#43bdf7"/>
<rect x="858" y="534" width="2" height="10" fill="#43bdf7"/>
<rect x="865" y="534" width="2" height="11" fill="#22a69a"/>
<rect x="873" y="534" width="2" height="11" fill="#22a69a"/>
<rect x="880" y="534" width="2" height="11" fill="#43bdf7"/>
<rect x="888" y="534" width="2" height="15" fill="#22a69a"/>
<rect x="895" y="534" width="2" height="15" fill="#22a69a"/>
<rect x="902" y="534" width="2" height="12" fill="#43bdf7"/>
<rect x="910" y="534" width="2" height="12" fill="#43bdf7"/>
<polyline points="0.0,548.4 9.4,554.2 17.6,557.8 24.7,558.2 32.9,556.6 40.5,556.4 47.0,558.2 54.1,561.0 61.6,565.8 69.4,570.0 77.6,573.5 84.7,576.6 91.8,580.6 100.0,585.3 107.0,590.5 114.1,595.9 121.2,601.3 128.9,606.5 136.5,610.0 143.5,611.6 151.8,612.4 160.0,612.8 167.1,613.5 174.1,614.7 181.6,615.4 189.4,617.0 196.5,619.4 204.7,621.8 211.8,623.6 220.0,624.8 227.1,623.6 237.1,619.9 245.4,616.4 254.9,613.3 263.2,609.2 270.8,605.7 278.6,602.1 286.4,599.0 294.0,596.2 301.1,593.1 308.3,589.6 314.9,586.0 322.5,582.4 329.6,578.4 337.9,574.1 345.0,570.1 352.1,566.6 360.0,562.5 367.5,559.9 374.7,558.3 381.8,557.1 389.4,555.4 397.2,551.1 404.3,547.1 412.1,541.7 419.7,536.2 427.3,529.8 435.1,523.4 442.2,519.1 449.3,517.5 457.2,516.3 464.8,516.3 471.9,517.1 479.0,516.4 487.3,515.2 494.4,514.5 502.2,513.6 509.3,511.7 516.9,509.3 524.0,506.9 531.1,504.5 538.7,502.2 545.8,500.3 553.7,497.9 560.8,495.5 569.1,492.7 576.2,490.3 583.3,487.9 590.9,485.6 598.3,483.7 605.1,482.7 613.0,482.5 620.8,483.2 628.4,484.4 636.0,485.6 642.6,487.5 649.7,489.6 657.3,491.5 665.1,493.2 673.0,495.1 680.1,497.4 687.7,497.4 697.1,496.2 705.4,493.9 713.7,490.8 722.0,486.8 730.3,482.5 738.6,479.2 746.9,476.8 754.5,474.9 762.3,473.7 770.6,473.7 778.2,474.4 786.0,476.1 794.3,479.2 802.6,482.5 810.9,485.6 819.2,487.9 827.5,490.8 835.8,493.9 844.1,497.4 852.4,500.3 860.3,503.4 868.3,506.2 877.3,509.3 884.5,512.1 892.8,515.7 901.0,517.6 911.7,520.0" fill="none" stroke="#1e9670" stroke-width="2" stroke-linejoin="round"/>
<polyline points="0.0,570.5 9.4,574.2 17.6,568.1 24.7,557.0 32.9,550.5 40.5,553.5 47.0,565.8 54.1,573.5 61.6,583.0 69.4,586.0 77.6,587.2 84.7,590.0 91.8,595.4 100.0,603.6 107.0,610.7 114.1,617.8 121.2,624.6 128.9,626.5 136.5,622.2 143.5,618.2 151.8,612.8 160.0,613.5 167.1,614.7 174.1,616.6 181.6,619.0 189.4,623.0 196.5,627.6 204.7,632.8 211.8,631.6 220.0,629.3 227.1,620.6 234.7,611.6 240.7,608.0 247.8,606.9 254.9,601.4 263.2,593.8 270.8,589.1 278.6,588.6 286.4,587.2 293.6,584.8 301.1,580.8 308.3,575.3 314.9,568.9 322.5,565.8 329.6,560.6 337.9,554.7 345.0,552.3 352.1,550.4 360.0,547.6 367.5,548.8 374.7,551.1 381.8,553.5 389.4,549.2 397.2,535.0 404.3,526.2 412.1,517.9 419.7,510.8 427.3,504.4 435.1,499.7 442.2,505.6 449.3,510.4 457.2,512.7 464.8,516.8 471.9,519.2 479.0,515.9 487.3,512.8 494.4,512.1 502.2,511.2 509.3,506.9 516.9,502.2 524.0,499.8 531.1,497.0 538.7,491.5 545.8,493.2 553.7,489.8 560.8,488.4 569.1,482.0 576.2,483.2 583.3,482.0 590.9,478.5 598.3,474.9 605.1,477.3 613.0,481.3 620.8,483.9 628.4,486.8 636.0,490.8 642.6,493.9 649.7,500.3 657.3,499.3 665.1,501.0 673.0,503.4 680.1,505.3 687.7,498.6 695.9,491.5 703.0,487.2 710.2,485.1 717.3,479.6 725.1,471.8 732.2,467.8 739.3,467.1 746.9,469.7 754.5,467.8 762.3,470.9 770.2,473.7 777.7,476.1 784.4,480.8 792.0,488.4 799.6,490.3 806.7,493.9 814.5,497.0 822.3,497.4 829.9,499.1 837.0,503.8 844.1,506.4 851.3,508.6 858.4,508.8 866.0,512.1 873.8,515.2 880.9,517.6 888.0,524.0 895.8,528.3 903.4,527.8 911.7,530.6" fill="none" stroke="#d6561b" stroke-width="2" stroke-linejoin="round"/>
<rect x="0" y="434" width="1020" height="1" fill="#d0d0d0"/>
<rect x="0" y="651" width="1020" height="1" fill="#d0d0d0"/>
<rect x="943" y="0" width="1" height="675" fill="#d0d0d0"/>
<rect x="0" y="0" width="1020" height="1" fill="#333333"/>
</svg>
<div class="t h" style="left:8.5px">FCPOc3</div>
<div class="t h" style="left:57.8px">·</div>
<div class="t h" style="left:66.5px">1<span class="cj"><svg style="top:0px" viewBox="0 0 12 12" width="12" height="12"><path d="M0.8,1.6 H11.3 M0,5.6 H12 M6,1.6 V6 Q5.6,9.2 0.5,11.6 M6.4,6.6 Q8.2,9.8 11.8,11.6" fill="none" stroke="currentColor" stroke-width="1.0"/></svg></span></div>
<div class="t h" style="left:89.2px">·</div>
<div class="t h" style="left:96.8px">MDX</div>
<div class="t h" style="left:127.2px">·</div>
<div class="t h" style="left:136.5px">Trade Price</div>
<div class="t h" style="left:205px"><span class="cj"><svg style="top:0px" viewBox="0 0 12 12" width="12" height="12"><path d="M0.3,1.6 H11.7 M0,5.6 H12 M3.9,1.6 V6 Q3.9,9.6 0.5,11.6 M8.6,1.6 V11.9" fill="none" stroke="currentColor" stroke-width="1.0"/></svg></span>=<span class="r">4433</span></div>
<div class="t h" style="left:258px"><span class="cj"><svg style="top:0px" viewBox="0 0 12 12" width="12" height="12"><path d="M5.6,0.5 V2 M-0.2,2.4 H11.9 M1.9,3.3 H9.6 V5 H1.9 Z M0.9,12 V6.3 H10.4 V11.1 Q10.4,11.7 9.4,11.7 M3,8.6 H8.8 V10.2 H3 Z" fill="none" stroke="currentColor" stroke-width="1.0"/></svg></span>=<span class="r">4461</span></div>
<div class="t h" style="left:310px"><span class="cj"><svg style="top:0px" viewBox="0 0 12 12" width="12" height="12"><path d="M3.8,0.9 L0.3,6.4 M2.9,3.8 V11.9 M5.9,3 V11 M5.9,3 L12,1.3 M5.9,6.4 H12.2 M9.1,2.6 Q9.3,9.5 12.2,11.4 M5.3,11.1 L8.6,10.2" fill="none" stroke="currentColor" stroke-width="1.0"/></svg></span>=<span class="r">4392</span></div>
<div class="t h" style="left:363px"><span class="cj"><svg style="top:0px" viewBox="0 0 12 12" width="12" height="12"><path d="M0.9,3.1 V9.6 L4.2,8.2 M4.2,0.9 V12 M6.6,0.9 L5,6.1 M5.6,3.1 H11.8 M10.5,3.1 Q9,9 4.7,12 M6.8,7.2 Q9,10 11.9,11.7" fill="none" stroke="currentColor" stroke-width="1.0"/></svg></span>=<span class="r">4396</span></div>
<div class="t h r" style="left:416px">-43 (−0.97%)</div>
<div style="position:absolute;left:502px;top:10px;width:29px;height:21px;border:1px solid #3b3b3b;border-radius:3px;box-sizing:border-box;background:#1b1b1b"></div>
<svg width="10" height="12" style="left:512px;top:14.5px" viewBox="0 0 10 12"><path d="M6.5 2.3 L2.9 6.3 L6.5 10.2" fill="none" stroke="#d8d8d8" stroke-width="1.3"/></svg>
<div class="t h" style="left:535.5px">BB 20 2</div>
<div class="t h" style="left:587px;font-weight:bold;color:#f4f4f4">4,438.3500</div>
<div class="t h" style="left:652.5px;color:#e9b525">4,515.1882</div>
<div class="t h" style="left:719px;color:#9a6fd6">4,361.5118</div>
<div style="position:absolute;left:947px;top:5px;width:70px;height:50px;border:1px solid #3b3b3b;border-radius:4px;box-sizing:border-box"></div>
<div class="t" style="left:951px;top:12px;font-size:12.5px;color:#e4e4e4">MYR</div>
<div class="t" style="left:951px;top:36px;font-size:12.5px;color:#e4e4e4">t</div>
<svg width="8" height="6" style="left:1006px;top:16px" viewBox="0 0 8 6"><path d="M1 1.5 L4 4.5 L7 1.5" fill="none" stroke="#d8d8d8" stroke-width="1.3"/></svg>
<svg width="8" height="6" style="left:1006px;top:40px" viewBox="0 0 8 6"><path d="M1 1.5 L4 4.5 L7 1.5" fill="none" stroke="#d8d8d8" stroke-width="1.3"/></svg>
<div class="t ax" style="top:82px">4600</div>
<div class="t ax" style="top:184px">4300</div>
<div class="t ax" style="top:220px">4200</div>
<div class="t ax" style="top:254px">4100</div>
<div class="t ax" style="top:288px">4000</div>
<div class="t ax" style="top:323px">3900</div>
<div class="t ax" style="top:357px">3800</div>
<div class="t ax" style="top:391px">3700</div>
<div class="lbl" style="top:109px;width:72px;background:#f5b800;color:#151515">4,515.1882</div>
<div class="lbl" style="top:133px;width:72px;background:#ffffff;color:#151515">4,438.3500</div>
<div class="lbl" style="line-height:19px;top:150px;width:38px;background:#e0435d;color:#fff">4396</div>
<div class="lbl" style="top:167px;width:72px;background:#8b5fcf;color:#fff">4,361.5118</div>
<div class="t ax" style="top:439px">120.0000</div>
<div class="t ax" style="top:469px">80.0000</div>
<div class="t ax" style="top:499px">40.0000</div>
<div class="t ax" style="top:559px">−40.0000</div>
<div class="t ax" style="top:589px">−80.0000</div>
<div class="t ax" style="top:619px">−120.0000</div>
<div class="lbl" style="line-height:19px;top:503px;width:55px;background:#20b47c;color:#fff">19.5122</div>
<div class="lbl" style="line-height:19px;top:520px;width:48px;background:#fb5510;color:#fff">5.8054</div>
<div class="lbl" style="line-height:19px;top:537px;width:61px;background:#43b9f6;color:#10243a">−13.7067</div>
<div class="t h" style="left:8.2px;top:445px">MACD 12 26 close 9 EMA EMA</div>
<div class="t h" style="left:185px;top:445px;color:#3fa6ea">−13.7067</div>
<div class="t h" style="left:242px;top:445px;color:#ec5a19">5.8054</div>
<div class="t h" style="left:285px;top:445px;color:#21a474">19.5122</div>
<div class="t tm" style="left:16px">4<span class="cj"><svg style="top:-1px" viewBox="0 0 12 12" width="12" height="12"><path d="M1.9,1.6 V6.8 Q1.9,9.8 0.5,11.6 M1.9,1.6 H10.3 V10.6 Q10.3,11.6 9.2,11.6 H7.6 M1.9,4.7 H10.3 M1.9,7.8 H10.3" fill="none" stroke="currentColor" stroke-width="1.45"/></svg></span></div>
<div class="t tm" style="left:172px">5<span class="cj"><svg style="top:-1px" viewBox="0 0 12 12" width="12" height="12"><path d="M1.9,1.6 V6.8 Q1.9,9.8 0.5,11.6 M1.9,1.6 H10.3 V10.6 Q10.3,11.6 9.2,11.6 H7.6 M1.9,4.7 H10.3 M1.9,7.8 H10.3" fill="none" stroke="currentColor" stroke-width="1.45"/></svg></span></div>
<div class="t tm" style="left:321px">6<span class="cj"><svg style="top:-1px" viewBox="0 0 12 12" width="12" height="12"><path d="M1.9,1.6 V6.8 Q1.9,9.8 0.5,11.6 M1.9,1.6 H10.3 V10.6 Q10.3,11.6 9.2,11.6 H7.6 M1.9,4.7 H10.3 M1.9,7.8 H10.3" fill="none" stroke="currentColor" stroke-width="1.45"/></svg></span></div>
<div class="t tm" style="left:463px">7<span class="cj"><svg style="top:-1px" viewBox="0 0 12 12" width="12" height="12"><path d="M1.9,1.6 V6.8 Q1.9,9.8 0.5,11.6 M1.9,1.6 H10.3 V10.6 Q10.3,11.6 9.2,11.6 H7.6 M1.9,4.7 H10.3 M1.9,7.8 H10.3" fill="none" stroke="currentColor" stroke-width="1.45"/></svg></span></div>
<div class="t tm" style="left:548px">16</div>
<div class="t tm" style="left:634px">8<span class="cj"><svg style="top:-1px" viewBox="0 0 12 12" width="12" height="12"><path d="M1.9,1.6 V6.8 Q1.9,9.8 0.5,11.6 M1.9,1.6 H10.3 V10.6 Q10.3,11.6 9.2,11.6 H7.6 M1.9,4.7 H10.3 M1.9,7.8 H10.3" fill="none" stroke="currentColor" stroke-width="1.45"/></svg></span></div>
<div class="t tm" style="left:790px">9<span class="cj"><svg style="top:-1px" viewBox="0 0 12 12" width="12" height="12"><path d="M1.9,1.6 V6.8 Q1.9,9.8 0.5,11.6 M1.9,1.6 H10.3 V10.6 Q10.3,11.6 9.2,11.6 H7.6 M1.9,4.7 H10.3 M1.9,7.8 H10.3" fill="none" stroke="currentColor" stroke-width="1.45"/></svg></span></div>
<div class="t tm" style="left:921px">10<span class="cj"><svg style="top:-1px" viewBox="0 0 12 12" width="12" height="12"><path d="M1.9,1.6 V6.8 Q1.9,9.8 0.5,11.6 M1.9,1.6 H10.3 V10.6 Q10.3,11.6 9.2,11.6 H7.6 M1.9,4.7 H10.3 M1.9,7.8 H10.3" fill="none" stroke="currentColor" stroke-width="1.45"/></svg></span></div>
<div style="position:absolute;left:944px;top:652px;width:76px;height:23px;background:#1b1b1b"></div>
<svg width="18" height="16" style="left:974px;top:658px" viewBox="0 0 18 16"><path d="M4.6 1.5 L12.7 1.5 L15.6 7.6 L12.7 13.6 L4.6 13.6 L1.5 7.6 Z" fill="none" stroke="#d4d4d4" stroke-width="1.2"/><circle cx="8.6" cy="7.6" r="2.1" fill="none" stroke="#d4d4d4" stroke-width="1.2"/></svg>
<div class="t" style="left:891.5px;top:624px;font-size:30.5px;color:#e9f0fc;letter-spacing:2.3px;-webkit-text-stroke:0.45px rgba(25,22,20,0.8)">FX678</div>
</body></html>
